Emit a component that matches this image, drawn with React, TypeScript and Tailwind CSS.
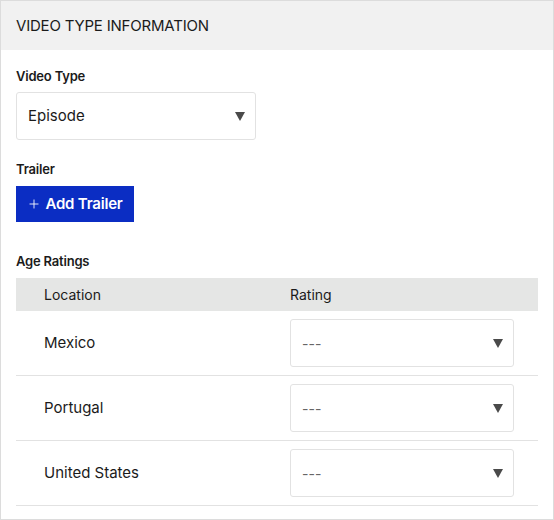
import { Plus } from 'lucide-react';

const locations = ['Mexico', 'Portugal', 'United States'];

function Caret() {
  return (
    <svg width="10" height="10" viewBox="0 0 10 10" className="shrink-0">
      <path d="M0 1 H10 L5 10 Z" fill="#4a4a4a" />
    </svg>
  );
}

function FakeSelect({ value, width, muted }: { value: string; width: string; muted?: boolean }) {
  return (
    <div
      className={`${width} h-[48px] flex items-center justify-between pl-[11px] pr-[10px] border border-[#e2e2e2] rounded-[3px] bg-white`}
    >
      <span className={muted ? 'text-[14px] text-[#666]' : 'text-[15px] text-[#1b1b1b]'}>{value}</span>
      <Caret />
    </div>
  );
}

export default function App() {
  return (
    <div className="w-[554px] h-[520px] bg-white" style={{ fontFamily: 'Inter, "Noto Sans", sans-serif' }}>
      <div className="h-full border border-[#dcdcdc] flex flex-col">
        <div className="h-[49px] bg-[#f1f1f1] flex items-center pt-[1px] px-[15px] text-[15px] text-[#1b1b1b] tracking-[-0.2px]">
          VIDEO TYPE INFORMATION
        </div>

        <div className="px-[15px] pt-[18px] flex flex-col">
          <div className="text-[13px] font-semibold text-[#1b1b1b] leading-[16px] tracking-[-0.2px]">Video Type</div>
          <div className="mt-[8px]">
            <FakeSelect value="Episode" width="w-[240px]" />
          </div>

          <div className="mt-[21px] text-[13px] font-semibold text-[#1b1b1b] leading-[16px] tracking-[-0.2px]">Trailer</div>
          <button className="mt-[9px] w-[118px] h-[36px] bg-[#0b2dc3] text-white text-[15px] font-semibold flex items-center justify-center gap-[4px] tracking-[-0.2px]">
            <Plus size={14} strokeWidth={1.5} />
            Add Trailer
          </button>

          <div className="mt-[31px] text-[13px] font-semibold text-[#1b1b1b] leading-[16px] tracking-[-0.2px]">Age Ratings</div>
          <div className="mt-[9px] w-[522px]">
            <div className="h-[33px] bg-[#e5e6e5] grid grid-cols-[274px_1fr] items-center text-[14px] text-[#1b1b1b]">
              <div className="pl-[28px]">Location</div>
              <div>Rating</div>
            </div>
            {locations.map((loc) => (
              <div
                key={loc}
                className="h-[65px] grid grid-cols-[274px_1fr] items-center border-b border-[#e2e2e2] text-[15px] text-[#1b1b1b]"
              >
                <div className="pl-[28px]">{loc}</div>
                <FakeSelect value="---" width="w-[224px]" muted />
              </div>
            ))}
          </div>
        </div>
      </div>
    </div>
  );
}
